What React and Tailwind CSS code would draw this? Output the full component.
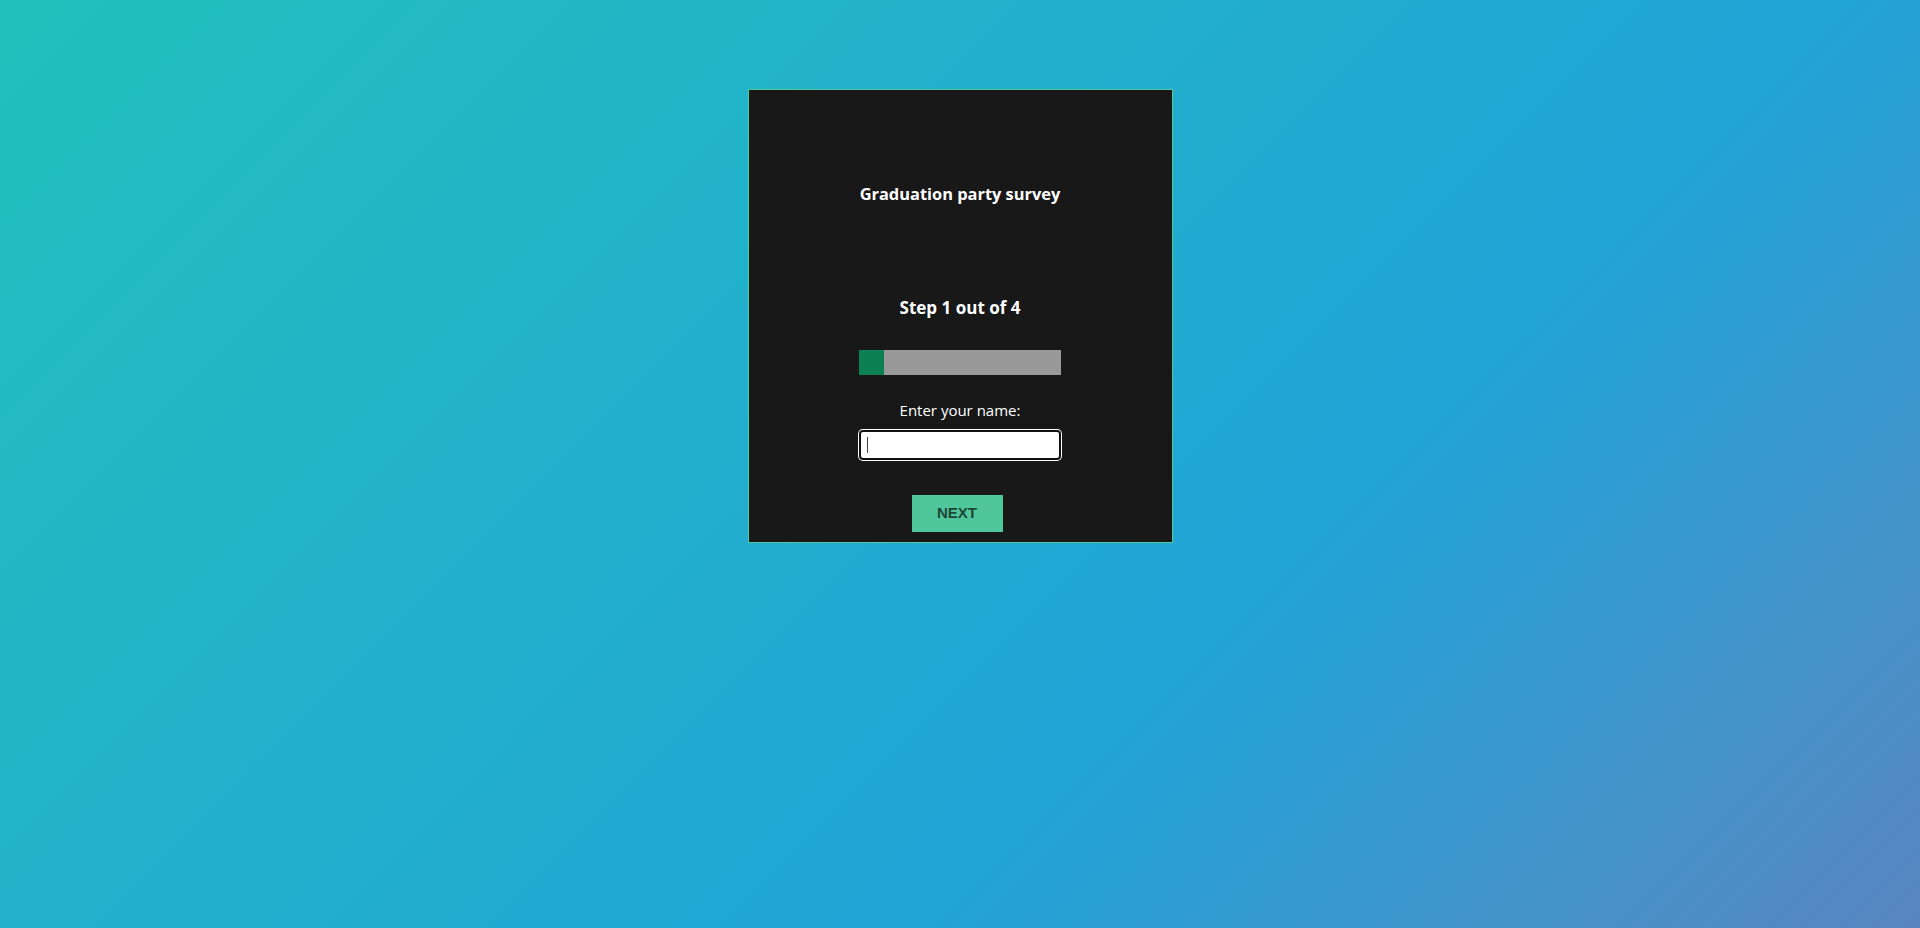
import { useState } from "react";

export default function App() {
  const [name, setName] = useState("");
  const step = 1;
  const total = 4;

  return (
    <div className="min-h-screen w-full bg-[linear-gradient(135deg,#22c0bc_0%,#21a4d7_65%,#5a86c0_100%)] flex justify-center pt-[89px] font-['Open_Sans',sans-serif]">
      <div className="w-[425px] h-[454px] border border-[#55c99c] bg-[#181818] flex flex-col items-center text-white">
        <h1 className="mt-[92px] text-[16.4px] leading-[24px] font-bold">
          Graduation party survey
        </h1>

        <h2 className="mt-[90px] text-[17px] leading-[24px] font-bold">
          Step {step} out of {total}
        </h2>

        <div className="mt-[30px] w-[202px] h-[25px] bg-[#999999] flex">
          <div className="h-full w-[25px] bg-[#0b8053]" />
        </div>

        <label htmlFor="name" className="mt-[24px] text-[15px] leading-[22px]">
          Enter your name:
        </label>

        <div className="relative mt-[11px]">
          <input
            id="name"
            type="text"
            value={name}
            onChange={(e) => setName(e.target.value)}
            className="block w-[198px] h-[26px] bg-white text-black rounded-[2px] px-[5px] text-[14px] outline-none shadow-[0_0_0_2px_#111111,0_0_0_3px_#ffffff]"
          />
          {!name && (
            <span className="absolute left-[6px] top-[5px] w-px h-[16px] bg-[#444]" />
          )}
        </div>

        <button className="mt-[37px] mr-[6px] w-[91px] h-[37px] bg-[#4fc69b] text-[#1d4638] text-[15px] font-bold font-['Liberation_Sans',Arial,sans-serif]">
          NEXT
        </button>
      </div>
    </div>
  );
}
